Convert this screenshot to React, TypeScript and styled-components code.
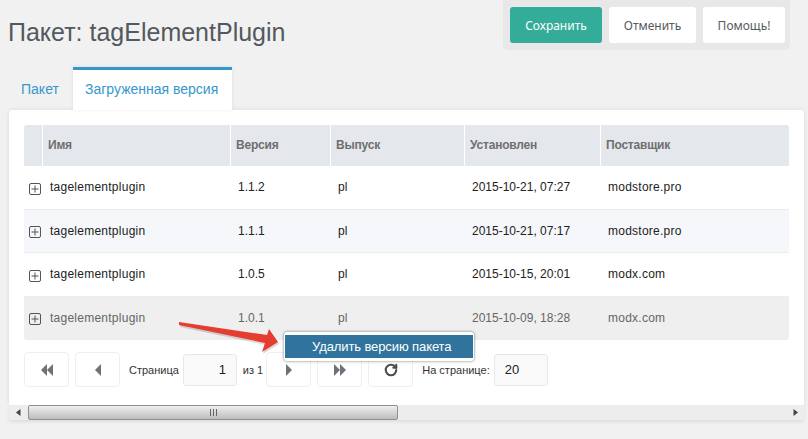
import React from 'react'
import styled, { createGlobalStyle } from 'styled-components'
import { RotateCw } from 'lucide-react'

const GlobalStyle = createGlobalStyle`
	html, body {
		margin: 0;
		padding: 0;
		background: #f1f1f1;
		overflow: hidden;
	}
	body {
		font-family: "Liberation Sans", Arial, sans-serif;
	}
`

const Page = styled.div`
	position: relative;
	width: 808px;
	height: 439px;
	overflow: hidden;
`

const Header = styled.header`
	display: flex;
	justify-content: space-between;
	align-items: flex-start;
	height: 67px;
	padding: 0 18px 0 8px;
	box-sizing: border-box;
`

const Title = styled.h1`
	margin: 18px 0 0;
	font-size: 25px;
	line-height: 28px;
	font-weight: 400;
	color: #53595f;
`

const Toolbar = styled.div`
	display: flex;
	gap: 7px;
	padding: 7px 5px 7px 7px;
	background: #e8e8e8;
	border-radius: 0 0 5px 5px;
`

const ToolButton = styled.button<{ $primary?: boolean; $width: number }>`
	width: ${p => p.$width}px;
	height: 36px;
	padding: 0;
	border: 0;
	border-radius: 3px;
	font-family: "Noto Sans", sans-serif;
	font-size: 12px;
	background: ${p => (p.$primary ? '#34ac9a' : '#fff')};
	color: ${p => (p.$primary ? '#fff' : '#555a60')};
`

const Tabs = styled.nav`
	display: flex;
	height: 43px;
	padding-left: 9px;
`

const Tab = styled.div<{ $active?: boolean }>`
	box-sizing: border-box;
	padding: ${p => (p.$active ? '11px 12px 0' : '14px 12px 0')};
	font-size: 14px;
	line-height: 16px;
	color: #3697cd;
	${p =>
		p.$active
			? `
		width: 159px;
		background: #fff;
		border-top: 3px solid #3697cd;
		box-shadow: 0 0 4px rgba(0, 0, 0, 0.08);
		position: relative;
		z-index: 1;
	`
			: 'width: 64px;'}
`

const Panel = styled.section`
	margin: 0 4px 0 9px;
	padding: 15px 15px 0;
	height: 295px;
	box-sizing: border-box;
	background: #fff;
	border-radius: 3px 3px 0 0;
	box-shadow: 0 0 4px rgba(0, 0, 0, 0.1);
`

const columns = '19px 188px 100px 134px 136px 188px'

const HeadRow = styled.div`
	display: grid;
	grid-template-columns: ${columns};
	height: 41px;
	background: #e4e8ec;
	border-radius: 3px 3px 0 0;
`

const HeadCell = styled.div`
	padding-left: 5px;
	border-right: 1px solid #fff;
	font-size: 12px;
	font-weight: 700;
	line-height: 40px;
	letter-spacing: -0.2px;
	color: #6f6f6f;

	&:last-child {
		border-right: 0;
	}
`

const Row = styled.div<{ $tone: 'plain' | 'alt' | 'selected' }>`
	display: grid;
	grid-template-columns: ${columns};
	height: 43.5px;
	box-sizing: border-box;
	align-items: center;
	font-size: 12px;
	border-bottom: 1px solid #ececec;
	color: ${p => (p.$tone === 'selected' ? '#666' : '#222')};
	background: ${p =>
		p.$tone === 'alt' ? '#f5f7fa' : p.$tone === 'selected' ? '#efefef' : '#fff'};
	${p => (p.$tone === 'selected' ? 'border-radius: 0 0 3px 3px;' : '')}
`

const Cell = styled.div<{ $tracking?: number }>`
	padding-left: 7px;
	letter-spacing: ${p => p.$tracking ?? 0}px;
`

const ExpandCell = styled.div`
	padding: 3px 0 0 5px;
	display: flex;
`

const Pager = styled.div`
	display: flex;
	align-items: center;
	height: 35px;
	margin-top: 12px;
	font-size: 11px;
	color: #333;
`

const PageButton = styled.div<{ $gap?: number }>`
	display: flex;
	align-items: center;
	justify-content: center;
	width: 45px;
	height: 35px;
	box-sizing: border-box;
	margin-right: ${p => p.$gap ?? 0}px;
	border: 1px solid #efefef;
	border-radius: 4px;
	background: #fff;
	color: #555;
`

const PageLabel = styled.span<{ $left: number; $right: number }>`
	margin: 0 ${p => p.$right}px 0 ${p => p.$left}px;
	white-space: nowrap;
`

const PageInput = styled.div<{ $align: 'left' | 'right' }>`
	width: 54px;
	height: 32px;
	box-sizing: border-box;
	padding: 0 10px;
	border: 1px solid #e8e8e8;
	border-radius: 3px;
	background: #f9f9f9;
	font-size: 13px;
	line-height: 29px;
	color: #222;
	text-align: ${p => p.$align};
`

const ScrollBar = styled.div`
	display: flex;
	align-items: center;
	height: 15px;
	margin: 0 4px 0 9px;
	background: #ededed;
	box-shadow: 0 2px 3px rgba(0, 0, 0, 0.08);
`

const ScrollArrow = styled.div<{ $side: 'left' | 'right' }>`
	width: 19px;
	display: flex;
	justify-content: center;
	color: #444;
	${p => (p.$side === 'right' ? 'margin-left: auto; width: 18px;' : '')}
`

const ScrollThumb = styled.div`
	display: flex;
	align-items: center;
	justify-content: center;
	width: 370px;
	height: 15px;
	box-sizing: border-box;
	border: 1px solid #8f8f8f;
	border-radius: 2px;
	background: linear-gradient(#f0f0f0, #d8d8d8 45%, #bcbcbc);
`

const Grip = styled.div`
	width: 7px;
	height: 7px;
	background: repeating-linear-gradient(90deg, #666 0 1px, transparent 1px 3px);
`

const ContextMenu = styled.div`
	position: absolute;
	left: 284px;
	top: 332px;
	width: 190px;
	height: 29px;
	box-sizing: border-box;
	padding: 3px 1px;
	background: #fff;
	border-radius: 3px;
	box-shadow: 0 0 3px rgba(0, 0, 0, 0.55);
	z-index: 3;
`

const MenuItem = styled.div`
	height: 23px;
	padding-left: 27px;
	background: #30739d;
	color: #fff;
	font-size: 13px;
	line-height: 24px;
	letter-spacing: -0.1px;
`

const Arrow = styled.svg`
	position: absolute;
	left: 176px;
	top: 318px;
	z-index: 2;
`

const PlusBox = () => (
	<svg width="12" height="12" viewBox="0 0 12 12">
		<rect x="0.5" y="0.5" width="11" height="11" rx="1.5" fill="none" stroke="#555" />
		<path d="M2.5 6h7M6 2.5v7" stroke="#555" />
	</svg>
)

const Triangle = ({ left, double }: { left?: boolean; double?: boolean }) => (
	<svg width="14" height="12" viewBox="0 0 14 12">
		<g fill="#6d7278" transform={left ? 'matrix(-1 0 0 1 14 0)' : undefined}>
			{double ? (
				<>
					<path d="M1 0 7 6 1 12z" />
					<path d="M7 0 13 6 7 12z" />
				</>
			) : (
				<path d="M4 0 10 6 4 12z" />
			)}
		</g>
	</svg>
)

const rows = [
	{ version: '1.1.2', date: '2015-10-21, 07:27', vendor: 'modstore.pro', tone: 'plain' },
	{ version: '1.1.1', date: '2015-10-21, 07:17', vendor: 'modstore.pro', tone: 'alt' },
	{ version: '1.0.5', date: '2015-10-15, 20:01', vendor: 'modx.com', tone: 'plain' },
	{ version: '1.0.1', date: '2015-10-09, 18:28', vendor: 'modx.com', tone: 'selected' }
] as const

export default function App() {
	return (
		<Page>
			<GlobalStyle />
			<Header>
				<Title>Пакет: tagElementPlugin</Title>
				<Toolbar>
					<ToolButton $primary $width={92}>
						Сохранить
					</ToolButton>
					<ToolButton $width={87}>Отменить</ToolButton>
					<ToolButton $width={82}>Помощь!</ToolButton>
				</Toolbar>
			</Header>
			<Tabs>
				<Tab>Пакет</Tab>
				<Tab $active>Загруженная версия</Tab>
			</Tabs>
			<Panel>
				<HeadRow>
					<HeadCell />
					<HeadCell>Имя</HeadCell>
					<HeadCell>Версия</HeadCell>
					<HeadCell>Выпуск</HeadCell>
					<HeadCell>Установлен</HeadCell>
					<HeadCell>Поставщик</HeadCell>
				</HeadRow>
				{rows.map(row => (
					<Row key={row.version} $tone={row.tone}>
						<ExpandCell>
							<PlusBox />
						</ExpandCell>
						<Cell $tracking={0.25}>tagelementplugin</Cell>
						<Cell>{row.version}</Cell>
						<Cell>pl</Cell>
						<Cell>{row.date}</Cell>
						<Cell $tracking={0.25}>{row.vendor}</Cell>
					</Row>
				))}
				<Pager>
					<PageButton $gap={6}>
						<Triangle left double />
					</PageButton>
					<PageButton>
						<Triangle left />
					</PageButton>
					<PageLabel $left={9} $right={4}>
						Страница
					</PageLabel>
					<PageInput $align="right">1</PageInput>
					<PageLabel $left={6} $right={3}>
						из 1
					</PageLabel>
					<PageButton $gap={6}>
						<Triangle />
					</PageButton>
					<PageButton $gap={6}>
						<Triangle double />
					</PageButton>
					<PageButton>
						<RotateCw size={14} strokeWidth={3.6} color="#4d4d4d" />
					</PageButton>
					<PageLabel $left={9} $right={4}>
						На странице:
					</PageLabel>
					<PageInput $align="left">20</PageInput>
				</Pager>
			</Panel>
			<ScrollBar>
				<ScrollArrow $side="left">
					<svg width="5" height="7" viewBox="0 0 5 7">
						<path d="M4.5 0v7L0 3.5z" fill="#444" />
					</svg>
				</ScrollArrow>
				<ScrollThumb>
					<Grip />
				</ScrollThumb>
				<ScrollArrow $side="right">
					<svg width="5" height="7" viewBox="0 0 5 7">
						<path d="M.5 0v7L5 3.5z" fill="#444" />
					</svg>
				</ScrollArrow>
			</ScrollBar>
			<Arrow width="110" height="40" viewBox="0 0 110 40">
				<path d="M3 4 L3 7 L89 25 L86 34 L102 24 L93 11 L91 17 Z" fill="#000" opacity=".15" transform="translate(1 2)" />
				<path d="M3 4 L3 7 L89 25 L86 34 L102 24 L93 11 L91 17 Z" fill="#e53d2f" />
			</Arrow>
			<ContextMenu>
				<MenuItem>Удалить версию пакета</MenuItem>
			</ContextMenu>
		</Page>
	)
}
